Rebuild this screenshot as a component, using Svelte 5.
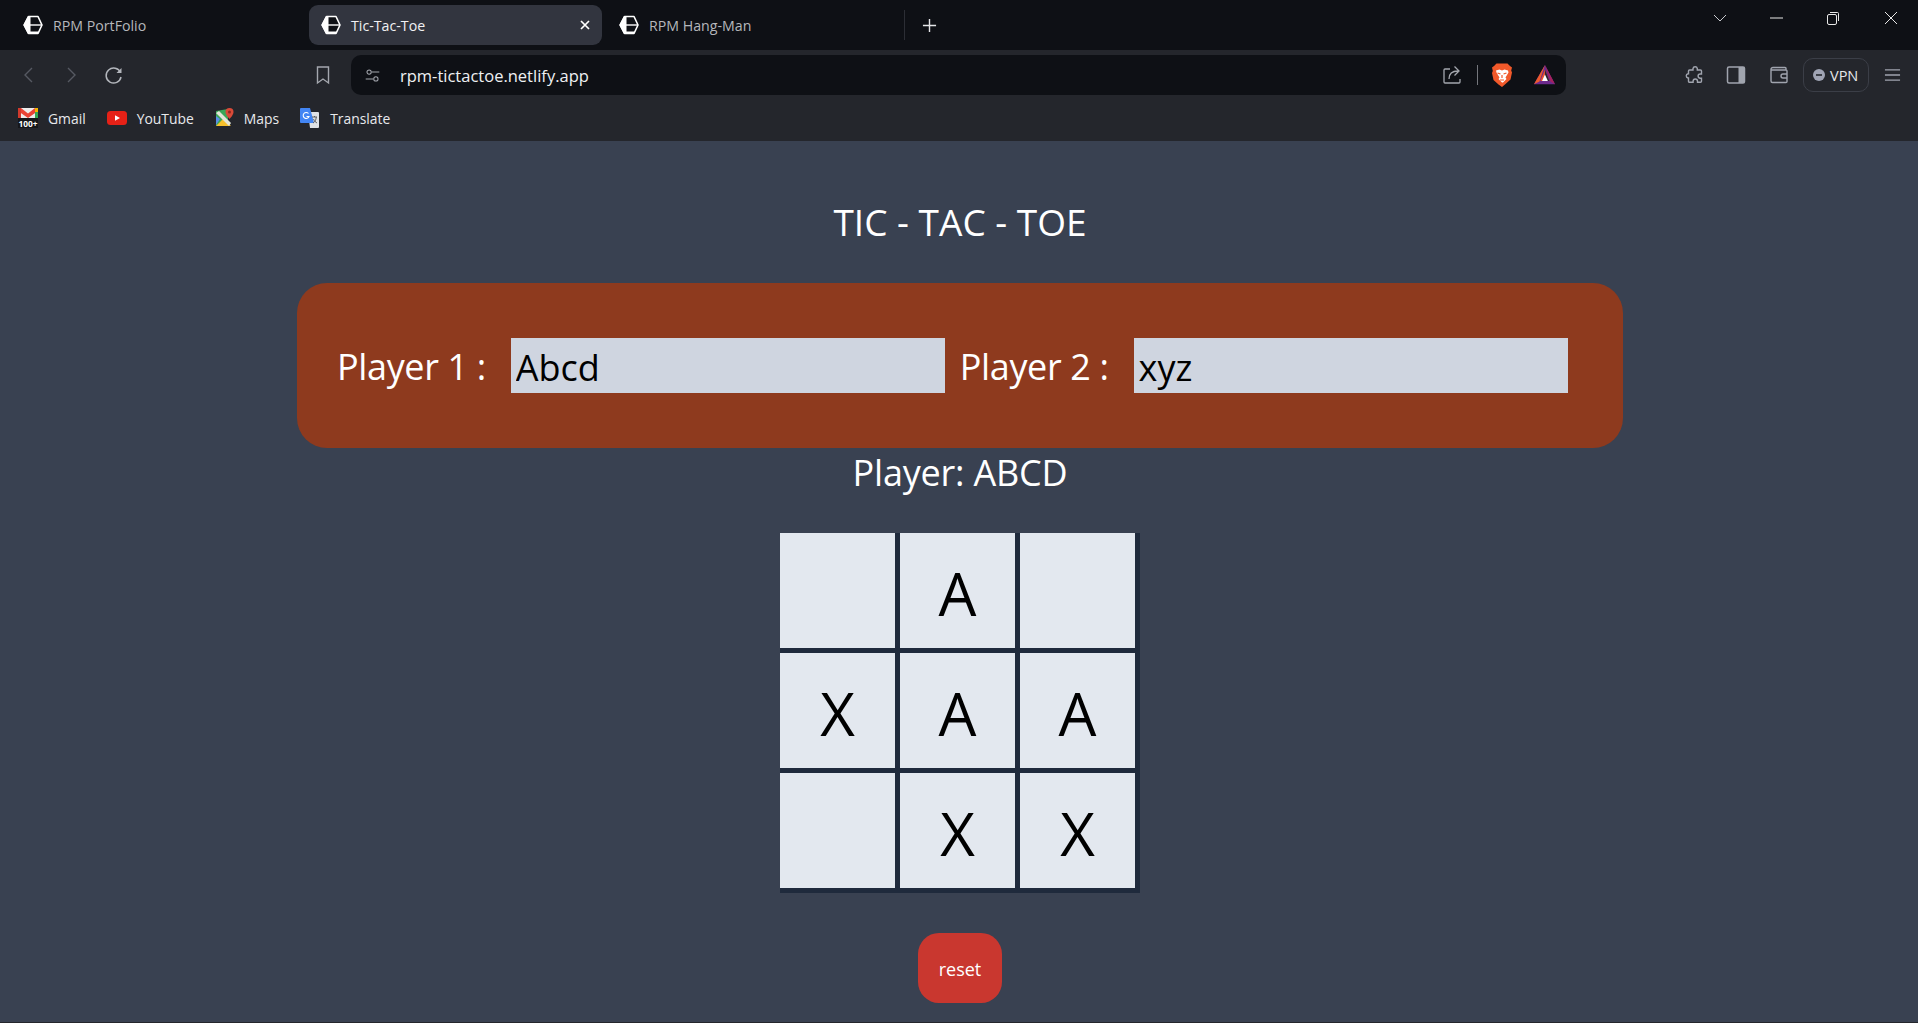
<script>
	const tabs = [
		{ title: 'RPM PortFolio', active: false },
		{ title: 'Tic-Tac-Toe', active: true },
		{ title: 'RPM Hang-Man', active: false }
	];
	const cells = ['', 'A', '', 'X', 'A', 'A', '', 'X', 'X'];
</script>

{#snippet favicon()}
	<svg class="fav" viewBox="0 0 20 20" aria-hidden="true">
		<path d="M5.500 1.500h9.500l4 8.500-4 8.500H5.500L1 10z" fill="#0e1015" stroke="#fff" stroke-width="1.600" stroke-linejoin="round" />
		<path d="M5 1l2.500 0v18H5L0.500 10z" fill="#fff" />
		<path d="M7 10h12" stroke="#fff" stroke-width="1.400" />
		<path d="M7 16.500h8.500L15 19H7z" fill="#fff" />
	</svg>
{/snippet}

<div class="browser">
	<div class="tabbar">
		{#each tabs as tab}
			<div class="tab" class:active={tab.active}>
				{@render favicon()}
				<span class="tab-title">{tab.title}</span>
				{#if tab.active}
					<svg class="tab-close" viewBox="0 0 10 10" aria-hidden="true"><path d="M1 1l8 8M9 1l-8 8" stroke="#fff" stroke-width="1.700" /></svg>
				{/if}
			</div>
		{/each}
		<span class="tab-sep"></span>
		<svg class="newtab" viewBox="0 0 16 16" aria-hidden="true"><path d="M8 1v14M1 8h14" stroke="#e4e5e8" stroke-width="1.500" /></svg>
		<div class="winctl">
			<svg viewBox="0 0 14 14" class="w-chev" aria-hidden="true"><path d="M1 4l6 6 6-6" fill="none" stroke="#c8cacf" /></svg>
			<svg viewBox="0 0 14 14" class="w-min" aria-hidden="true"><path d="M0 7h13" stroke="#e8e8e8" /></svg>
			<svg viewBox="0 0 14 14" class="w-max" aria-hidden="true"><rect x="1.500" y="3.500" width="9" height="10" rx="1.500" fill="none" stroke="#e8e8e8" /><path d="M4 1.500h7.500a1 1 0 0 1 1 1V10" fill="none" stroke="#e8e8e8" /></svg>
			<svg viewBox="0 0 14 14" class="w-close" aria-hidden="true"><path d="M1 1l12 12M13 1L1 13" stroke="#e8e8e8" /></svg>
		</div>
	</div>

	<div class="toolbar">
		<svg class="ic nav-back" viewBox="0 0 20 20" aria-hidden="true"><path d="M13 3l-7 7 7 7" fill="none" stroke="#565962" stroke-width="1.400" /></svg>
		<svg class="ic nav-fwd" viewBox="0 0 20 20" aria-hidden="true"><path d="M7 3l7 7-7 7" fill="none" stroke="#565962" stroke-width="1.400" /></svg>
		<svg class="ic nav-reload" viewBox="0 0 20 20" aria-hidden="true"><path d="M16.500 7.500A7.500 7.500 0 1 0 17 12" fill="none" stroke="#b3b6bc" stroke-width="1.500" /><path d="M17.500 3v5h-5z" fill="#b3b6bc" /></svg>
		<svg class="ic nav-mark" viewBox="0 0 20 20" aria-hidden="true"><path d="M4.500 2h11v16L10 14l-5.500 4z" fill="none" stroke="#a4a7ae" stroke-width="1.400" /></svg>
		<div class="urlbar">
			<svg class="ic tune" viewBox="0 0 20 20" aria-hidden="true"><circle cx="6" cy="6" r="2.500" fill="none" stroke="#a4a7ae" stroke-width="1.200" /><path d="M9 6h9M2 14h9" stroke="#a4a7ae" stroke-width="1.200" /><circle cx="14" cy="14" r="2.500" fill="none" stroke="#a4a7ae" stroke-width="1.200" /></svg>
			<span class="url">rpm-tictactoe.netlify.app</span>
			<svg class="ic share" viewBox="0 0 20 20" aria-hidden="true"><path d="M8 4H3a1 1 0 0 0-1 1v12a1 1 0 0 0 1 1h14a1 1 0 0 0 1-1v-3" fill="none" stroke="#a4a7ae" stroke-width="1.300" /><path d="M7 14c0-5 3-8 9-8M12.500 1.500L17 6l-4.500 4.500" fill="none" stroke="#a4a7ae" stroke-width="1.300" /></svg>
			<span class="url-sep"></span>
			<svg class="ic brave" viewBox="0 0 20 24" aria-hidden="true">
				<path d="M4.500 0.500h11L18 3l2 1.500-.8 3 .8 2-1.500 7-5 4.500L10 24l-3.500-2.500-5-4.500-1.500-7 .8-2L0 4.500 2 3z" fill="#f1592a" />
				<path d="M4 7.500l3.500-1 2.500 1 2.500-1 3.500 1 .5 2-3 5 1 1.500-3.500 3.500h-1L6.500 16l1-1.500-3-5z" fill="#fff" />
				<path d="M5.500 10l3 1M14.500 10l-3 1M10 12v3M8 17h4" stroke="#f1592a" stroke-width="1.200" />
			</svg>
			<svg class="ic bat" viewBox="0 0 24 24" aria-hidden="true">
				<path d="M12.500 1L0.500 22h23z" fill="#6c2a8d" />
				<path d="M12.500 1L0.500 22l6-3z" fill="#ee5a2d" />
				<path d="M12.500 1L23.500 22l-5-3z" fill="#a5215f" />
				<path d="M12.500 6L17.500 18.500h-10z" fill="#e9532d" />
				<path d="M12.500 6L17.500 18.500h-5z" fill="#2a2230" />
				<path d="M12.500 11.500L15.700 18.500h-6.400z" fill="#fff" />
			</svg>
		</div>
		<svg class="ic puzzle" viewBox="0 0 20 20" aria-hidden="true"><path d="M8 3.500a2.200 2.200 0 0 1 4.300 0V5h3.200a1 1 0 0 1 1 1v3h-1.300a2 2 0 0 0 0 4.200h1.300v3a1 1 0 0 1-1 1h-3v-1a2.200 2.200 0 0 0-4.400 0v1H4.500a1 1 0 0 1-1-1v-3.200H3a2.200 2.200 0 0 1 0-4.300h.500V6a1 1 0 0 1 1-1H8z" fill="none" stroke="#a0a4ae" stroke-width="1.400" /></svg>
		<svg class="ic sidebar" viewBox="0 0 20 20" aria-hidden="true"><rect x="1.500" y="2" width="17" height="16" rx="1.500" fill="none" stroke="#a0a4ae" stroke-width="1.500" /><path d="M12.500 2h5a1 1 0 0 1 1 1v14a1 1 0 0 1-1 1h-5z" fill="#a0a4ae" /></svg>
		<svg class="ic wallet" viewBox="0 0 20 20" aria-hidden="true"><path d="M17 5V3.500a1 1 0 0 0-1-1H4a2 2 0 0 0-2 2V16a1.500 1.500 0 0 0 1.500 1.500H17a1 1 0 0 0 1-1V6a1 1 0 0 0-1-1H2.500" fill="none" stroke="#a0a4ae" stroke-width="1.400" /><path d="M18 9h-4a2 2 0 0 0 0 4h4" fill="none" stroke="#a0a4ae" stroke-width="1.400" /></svg>
		<div class="vpn">
			<svg viewBox="0 0 12 12" aria-hidden="true"><circle cx="6" cy="6" r="6" fill="#a0a4b4" /><path d="M3 6h6" stroke="#24262c" stroke-width="1.600" /></svg>
			<span>VPN</span>
		</div>
		<svg class="ic burger" viewBox="0 0 18 14" aria-hidden="true"><path d="M1 1.500h16M1 7h16M1 12.500h16" stroke="#a0a4ae" stroke-width="1.400" /></svg>
	</div>

	<div class="bookmarks">
		<div class="bm bm-gmail">
			<svg viewBox="0 0 20 20" aria-hidden="true">
				<rect x="0" y="0" width="20" height="11" fill="#ececec" />
				<path d="M0 0h3l7 5.500L17 0h3v3l-10 7L0 3z" fill="#ea4335" />
				<path d="M0 0h3v11H0z" fill="#d0392c" />
				<path d="M17 0h3v4h-3z" fill="#f4b400" />
				<path d="M17 4h3v7h-3z" fill="#34a853" />
				<rect x="0" y="10" width="20" height="10" fill="#16171a" />
				<text x="10" y="18.500" text-anchor="middle" textLength="19" lengthAdjust="spacingAndGlyphs" class="hundred">100+</text>
			</svg>
			<span>Gmail</span>
		</div>
		<div class="bm bm-yt">
			<svg viewBox="0 0 20 14" class="short" aria-hidden="true"><rect width="20" height="14" rx="3.500" fill="#e62117" /><path d="M8 4.200l5 2.800-5 2.800z" fill="#fff" /></svg>
			<span>YouTube</span>
		</div>
		<div class="bm bm-maps">
			<svg viewBox="0 0 18 20" aria-hidden="true">
				<path d="M0 3l12-2v17H0z" fill="#3aa757" />
				<path d="M0 18l7-7 8 7z" fill="#f6c02c" />
				<path d="M0 8l4 3-4 6z" fill="#5a8fe8" />
				<path d="M3 3l12 12-2 3L0 5z" fill="#e4e6d8" />
				<path d="M13.500 0a4 4 0 0 1 4 4c0 3-4 7-4 7s-4-4-4-7a4 4 0 0 1 4-4z" fill="#d94a38" />
				<circle cx="13.500" cy="4" r="1.500" fill="#8c2a20" />
			</svg>
			<span>Maps</span>
		</div>
		<div class="bm bm-tr">
			<svg viewBox="0 0 20 20" aria-hidden="true">
				<path d="M8 4h10a1 1 0 0 1 1 1v14a1 1 0 0 1-1 1H10z" fill="#dfe1e5" />
				<path d="M1 0h9l4 15H1a1 1 0 0 1-1-1V1a1 1 0 0 1 1-1z" fill="#4285f4" />
				<path d="M8.500 5.500a3 3 0 1 0 .5 3H6.500" fill="none" stroke="#fff" stroke-width="1.100" />
				<path d="M12 9h5M14.500 8v1M13 15c2-1 3-3 3.300-6M13.500 11c.8 2 2 3 3.500 4" fill="none" stroke="#555" stroke-width="0.900" />
			</svg>
			<span>Translate</span>
		</div>
	</div>

	<main class="page">
		<h1 class="title">TIC - TAC - TOE</h1>

		<div class="players">
			<label class="label" for="p1">Player 1 :</label>
			<input id="p1" class="name first" value="Abcd" />
			<label class="label second" for="p2">Player 2 :</label>
			<input id="p2" class="name" value="xyz" />
		</div>

		<p class="turn">Player: ABCD</p>

		<div class="board">
			{#each cells as cell}
				<button class="cell">{cell}</button>
			{/each}
		</div>

		<button class="reset">reset</button>
	</main>
</div>

<style>
	:global(body) {
		background: #394151;
	}

	.browser {
		display: flex;
		flex-direction: column;
		height: 1023px;
		overflow: hidden;
		font-family: "Open Sans", "Noto Sans", sans-serif;
	}

	/* tab strip */
	.tabbar {
		display: flex;
		align-items: center;
		flex: none;
		height: 50px;
		padding-left: 11px;
		gap: 5px;
		background: #0e1015;
	}

	.tab {
		display: flex;
		align-items: center;
		flex: none;
		width: 293px;
		height: 40px;
		box-sizing: border-box;
		padding: 0 12px 0 12px;
		border-radius: 9px;
	}

	.tab.active {
		background: #32353f;
	}

	.fav {
		flex: none;
		width: 20px;
		height: 20px;
		margin-right: 10px;
	}

	.tab-title {
		flex: 1;
		font-size: 14.200px;
		color: #b5b7bb;
	}

	.tab.active .tab-title {
		color: #f1f1f3;
	}

	.tab-close {
		width: 10px;
		height: 10px;
	}

	.tab-sep {
		width: 1px;
		height: 30px;
		margin-left: -1px;
		background: #2c2e35;
	}

	.newtab {
		width: 15px;
		height: 15px;
		margin-left: 12px;
	}

	.winctl {
		display: flex;
		align-items: center;
		margin-left: auto;
		height: 36px;
		margin-bottom: 14px;
	}

	.winctl svg {
		width: 14px;
		height: 14px;
	}

	.w-chev {
		margin-right: 43px;
	}

	.w-min {
		margin-right: 42px;
	}

	.w-max {
		margin-right: 44px;
	}

	.w-close {
		margin-right: 20px;
	}

	/* address bar */
	.toolbar {
		display: flex;
		align-items: center;
		flex: none;
		height: 46px;
		box-sizing: border-box;
		padding: 5px 0 1px 19px;
		background: #24262c;
	}

	.ic {
		flex: none;
		width: 20px;
		height: 20px;
	}

	.nav-fwd {
		margin-left: 22px;
	}

	.nav-reload {
		margin-left: 23px;
	}

	.nav-mark {
		margin-left: 189px;
	}

	.urlbar {
		display: flex;
		align-items: center;
		flex: none;
		width: 1215px;
		height: 40px;
		box-sizing: border-box;
		margin-left: 18px;
		padding-left: 13px;
		border-radius: 10px;
		background: #0e1015;
	}

	.tune {
		width: 17px;
		height: 17px;
	}

	.url {
		width: 189px;
		margin-left: 19px;
		font-size: 16.500px;
		white-space: nowrap;
		color: #eef0f3;
	}

	.share {
		margin-left: 853px;
	}

	.url-sep {
		width: 1px;
		height: 20px;
		margin-left: 15px;
		background: #74767c;
	}

	.brave {
		width: 20px;
		height: 24px;
		margin-left: 14px;
	}

	.bat {
		width: 23px;
		height: 22px;
		margin-left: 21px;
	}

	.puzzle {
		margin-left: 119px;
	}

	.sidebar {
		margin-left: 21px;
	}

	.wallet {
		margin-left: 23px;
	}

	.vpn {
		display: flex;
		align-items: center;
		flex: none;
		gap: 5px;
		width: 66px;
		height: 34px;
		box-sizing: border-box;
		margin-left: 14px;
		padding-left: 9px;
		border: 1px solid #3b3e47;
		border-radius: 10px;
		font-size: 14.500px;
		color: #e4e6ea;
	}

	.vpn svg {
		width: 12px;
		height: 12px;
	}

	.burger {
		width: 17px;
		height: 14px;
		margin-left: 15px;
	}

	/* bookmarks */
	.bookmarks {
		display: flex;
		align-items: center;
		flex: none;
		height: 45px;
		box-sizing: border-box;
		padding: 0 0 1px 18px;
		background: #24262c;
	}

	.bm {
		display: flex;
		align-items: center;
		gap: 10px;
		font-size: 13.900px;
		color: #e8e9ec;
	}

	.bm svg {
		width: 20px;
		height: 20px;
	}

	.bm svg.short {
		height: 14px;
	}

	.hundred {
		font-size: 9px;
		font-weight: 700;
		fill: #fff;
	}

	.bm-yt {
		margin-left: 21px;
	}

	.bm-maps {
		margin-left: 22px;
	}

	.bm-maps svg {
		width: 18px;
	}

	.bm-tr {
		margin-left: 21px;
	}

	/* game page; the left padding puts its centre line at x = 960 */
	.page {
		display: flex;
		flex-direction: column;
		align-items: center;
		flex: 1;
		box-sizing: border-box;
		padding-left: 2px;
		border-bottom: 1px solid #24262c;
		color: #fff;
		background: #394151;
	}

	.title {
		margin: 56px 0 0;
		font-size: 37px;
		font-weight: 400;
		line-height: 50px;
	}

	.players {
		display: flex;
		align-items: center;
		align-self: flex-start;
		width: 1326px;
		height: 165px;
		box-sizing: border-box;
		margin: 36px 0 0 295px;
		padding-left: 40px;
		border-radius: 30px;
		background: #8e3a1e;
	}

	.label {
		padding-top: 2px;
		font-size: 36px;
		line-height: 55px;
		letter-spacing: -0.370px;
	}

	.label.second {
		margin-left: 15px;
	}

	.name {
		flex: none;
		width: 434px;
		height: 55px;
		box-sizing: border-box;
		margin-left: 25px;
		padding: 4px 5px 0;
		border: 0;
		border-radius: 0;
		outline: 0;
		font: 36px "Open Sans", "Noto Sans", sans-serif;
		color: #000;
		background: #cfd5e0;
	}

	.turn {
		margin: 0;
		font-size: 36px;
		line-height: 50px;
		letter-spacing: -0.200px;
	}

	.board {
		display: grid;
		grid-template-columns: repeat(3, 115px);
		grid-auto-rows: 115px;
		gap: 5px;
		padding: 0 5px 5px 0;
		margin-top: 35px;
		background: #1f2a3c;
	}

	.cell {
		padding: 4px 0 0;
		border: 0;
		font: 60px "Open Sans", "Noto Sans", sans-serif;
		color: #000;
		background: #e3e8ef;
	}

	.reset {
		width: 84px;
		height: 70px;
		margin-top: 40px;
		padding: 2px 0 0;
		border: 0;
		border-radius: 21px;
		font: 18px "Open Sans", "Noto Sans", sans-serif;
		color: #fff;
		background: #c9372f;
	}
</style>
